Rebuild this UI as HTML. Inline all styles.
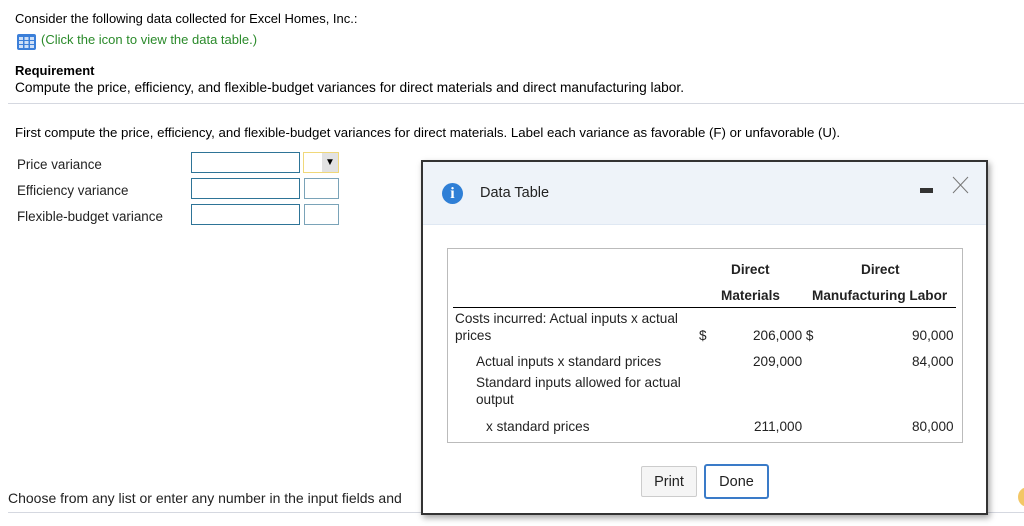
<!DOCTYPE html>
<html><head><style>
body{margin:0;width:1024px;height:526px;background:#fff;font-family:"Liberation Sans",sans-serif;color:#000;position:relative;overflow:hidden;font-size:13px}
.a{position:absolute;white-space:nowrap}
.in{position:absolute;border:1px solid #2e7497;background:#fff;box-sizing:border-box}
.sm{position:absolute;border:1px solid #7aa3b8;background:#fff;box-sizing:border-box}
.t{font-size:13.4px;color:#222}
.d{font-size:13.6px;color:#222;line-height:17px}
.b{font-size:13.6px;font-weight:bold;color:#222}
</style></head><body>
<div class="a" style="left:15px;top:11px">Consider the following data collected for Excel Homes, Inc.:</div>
<svg class="a" style="left:17px;top:34px" width="19" height="16" viewBox="0 0 19 16"><rect width="19" height="16" rx="2" fill="#3b7fd9"/><g fill="#cfe0f7"><rect x="2" y="3" width="4" height="3"/><rect x="7.5" y="3" width="4" height="3"/><rect x="13" y="3" width="4" height="3"/><rect x="2" y="7" width="4" height="3"/><rect x="7.5" y="7" width="4" height="3"/><rect x="13" y="7" width="4" height="3"/><rect x="2" y="11" width="4" height="3"/><rect x="7.5" y="11" width="4" height="3"/><rect x="13" y="11" width="4" height="3"/></g></svg>
<div class="a" style="left:41px;top:32px;color:#2a8a2a">(Click the icon to view the data table.)</div>
<div class="a" style="left:15px;top:63px;font-weight:bold">Requirement</div>
<div class="a" style="left:15px;top:80px;font-size:13.7px">Compute the price, efficiency, and flexible-budget variances for direct materials and direct manufacturing labor.</div>
<div class="a" style="left:8px;top:103px;width:1016px;height:1px;background:#d5d8e0"></div>
<div class="a" style="left:15px;top:125px;font-size:13.25px">First compute the price, efficiency, and flexible-budget variances for direct materials. Label each variance as favorable (F) or unfavorable (U).</div>
<div class="a t" style="left:17px;top:157px">Price variance</div>
<div class="a t" style="left:17px;top:183px">Efficiency variance</div>
<div class="a t" style="left:17px;top:209px">Flexible-budget variance</div>
<div class="in" style="left:191px;top:152px;width:109px;height:21px"></div>
<div class="in" style="left:191px;top:178px;width:109px;height:21px"></div>
<div class="in" style="left:191px;top:204px;width:109px;height:21px"></div>
<div class="a" style="left:303px;top:152px;width:36px;height:21px;border:1px solid #f0d87a;box-sizing:border-box;background:#fff"><div style="position:absolute;right:0;top:0;width:16px;height:19px;background:#e2e2e2;font-size:10px;text-align:center;line-height:19px">▼</div></div>
<div class="sm" style="left:304px;top:178px;width:35px;height:21px"></div>
<div class="sm" style="left:304px;top:204px;width:35px;height:21px"></div>
<div class="a" style="left:8px;top:490px;font-size:14px;color:#222">Choose from any list or enter any number in the input fields and</div>
<div class="a" style="left:8px;top:512px;width:1016px;height:1px;background:#d5d8e0"></div>
<div class="a" style="left:1018px;top:487px;width:20px;height:20px;border-radius:50%;background:#f3c766"></div>

<div class="a" style="left:421px;top:160px;width:567px;height:355px;border:2px solid #333;box-sizing:border-box;background:#fff;box-shadow:2px 3px 6px rgba(0,0,0,.35)">
 <div style="position:absolute;left:0;top:0;right:0;height:62px;background:#eef3f9;border-bottom:1px solid #dfe8f3"></div>
</div>
<div class="a" style="left:442px;top:183px;width:21px;height:21px;border-radius:50%;background:#2f7fd6;color:#fff;font-weight:bold;font-family:'Liberation Serif',serif;font-size:16px;text-align:center;line-height:21px">i</div>
<div class="a" style="left:480px;top:185px;font-size:14.5px;color:#222">Data Table</div>
<div class="a" style="left:920px;top:188px;width:13px;height:5px;background:#333"></div>
<svg class="a" style="left:952px;top:176px" width="17" height="18"><path d="M1 1L16 17M16 1L1 17" stroke="#777" stroke-width="1"/></svg>
<div class="a" style="left:447px;top:248px;width:516px;height:195px;border:1px solid #bbb;box-sizing:border-box"></div>
<div class="a b" style="left:731px;top:262px">Direct</div>
<div class="a b" style="left:861px;top:262px">Direct</div>
<div class="a b" style="left:721px;top:288px">Materials</div>
<div class="a b" style="left:812px;top:288px">Manufacturing Labor</div>
<div class="a" style="left:453px;top:307px;width:503px;height:1px;background:#000"></div>
<div class="a d" style="left:455px;top:310px">Costs incurred: Actual inputs x actual<br>prices</div>
<div class="a d" style="left:699px;top:327px">$</div>
<div class="a d" style="left:753px;top:327px">206,000 $</div>
<div class="a d" style="left:912px;top:327px">90,000</div>
<div class="a d" style="left:476px;top:353px">Actual inputs x standard prices</div>
<div class="a d" style="left:753px;top:353px">209,000</div>
<div class="a d" style="left:912px;top:353px">84,000</div>
<div class="a d" style="left:476px;top:374px">Standard inputs allowed for actual<br>output</div>
<div class="a d" style="left:486px;top:418px">x standard prices</div>
<div class="a d" style="left:754px;top:418px">211,000</div>
<div class="a d" style="left:912px;top:418px">80,000</div>
<div class="a" style="left:641px;top:466px;width:56px;height:31px;border:1px solid #ccc;border-radius:2px;background:#f5f5f5;box-sizing:border-box;text-align:center;line-height:31px;font-size:14.5px;color:#222">Print</div>
<div class="a" style="left:704px;top:464px;width:65px;height:35px;border:2px solid #3a7bc8;border-radius:3px;background:#fff;box-sizing:border-box;text-align:center;line-height:33px;font-size:14.5px;color:#222">Done</div>
</body></html>
